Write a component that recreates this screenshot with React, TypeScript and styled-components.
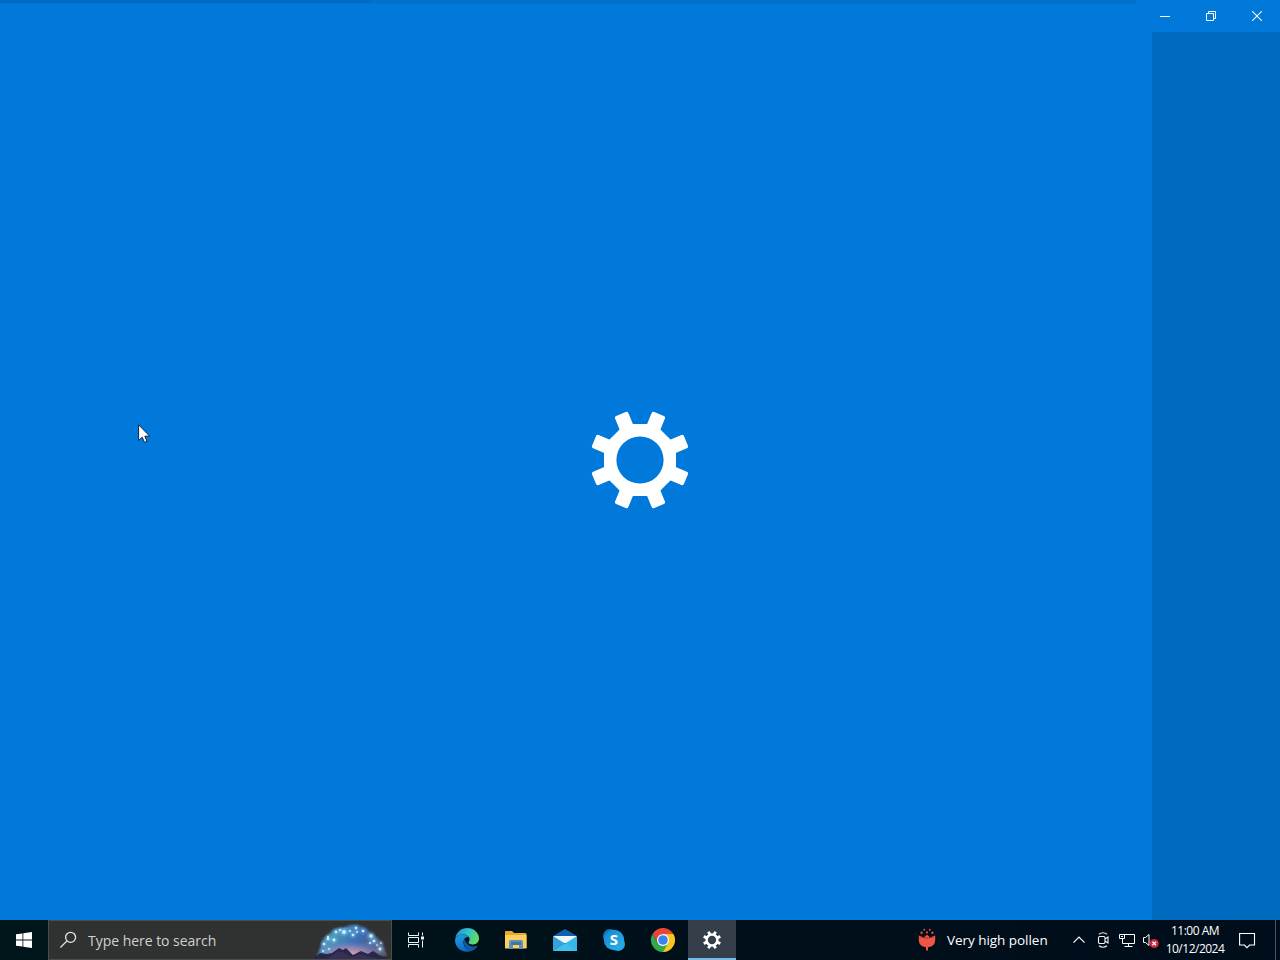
import React from "react";
import styled, { createGlobalStyle } from "styled-components";

const TEETH = [22.5, 67.5, 112.5, 157.5, 202.5, 247.5, 292.5, 337.5];

const SPARKS = [
  [9, 23, 1.6], [13, 16, 1.3], [8, 30, 1.2], [14, 28, 1.1], [19, 19, 1.7],
  [21, 11, 1.5], [25, 9, 1.3], [29, 11, 2.3], [35, 10, 1.2], [41, 7, 1.4],
  [38, 14, 1.5], [48, 10, 1.5], [42, 11, 1.1], [56, 15, 2.1], [59, 20, 1.6],
  [55, 22, 1.2], [65, 28, 1.7], [66, 22, 1], [13, 18, 1.5], [62, 24, 1],
];

const BigGear = () => (
  <svg width="100" height="100" viewBox="-50 -50 100 100" fill="#fff">
    {TEETH.map((angle) => (
      <rect key={angle} x="-7.2" y="-49.8" width="14.4" height="22" rx="2" transform={`rotate(${angle})`} />
    ))}
    <path
      fillRule="evenodd"
      d="M-14.9-36H14.9L36-14.9V14.9L14.9 36H-14.9L-36 14.9V-14.9ZM0-23.6A23.6 23.6 0 1 0 0 23.6A23.6 23.6 0 1 0 0-23.6Z"
    />
  </svg>
);

const SmallGear = () => (
  <svg width="18" height="18" viewBox="-50 -50 100 100" fill="#fff">
    {TEETH.map((angle) => (
      <rect key={angle} x="-8" y="-50" width="16" height="22" rx="2" transform={`rotate(${angle})`} />
    ))}
    <circle r="30" fill="none" stroke="#fff" strokeWidth="14" />
  </svg>
);

const CursorIcon = () => (
  <svg width="13" height="20" viewBox="0 0 13 20">
    <path d="M.6.8V16.5L4.2 13.2L6.5 18.4L9 17.3L6.8 12.2H11.7Z" fill="#fff" stroke="#0b2440" strokeWidth="1" />
  </svg>
);

const WindowsIcon = () => (
  <svg width="16" height="16" viewBox="0 0 16 16" fill="#fff">
    <path d="M0 2.3L6.5 1.4V7.6H0ZM7.3 1.3L16 0V7.6H7.3ZM0 8.4H6.5V14.6L0 13.7ZM7.3 8.4H16V16L7.3 14.7Z" />
  </svg>
);

const SearchIcon = () => (
  <svg width="18" height="18" viewBox="0 0 18 18" fill="none" stroke="#e6e6e6" strokeWidth="1.3">
    <circle cx="10.6" cy="6.3" r="5" />
    <path d="M7 9.9L.4 16.6" />
  </svg>
);

const HighlightArt = () => (
  <svg width="76" height="38" viewBox="0 0 76 38">
    <defs>
      <linearGradient id="dome" x1="0" y1="0" x2="1" y2="0.2">
        <stop offset="0" stopColor="#4e5a92" />
        <stop offset="0.3" stopColor="#4c93b5" />
        <stop offset="0.65" stopColor="#3b6cb5" />
        <stop offset="1" stopColor="#605d78" />
      </linearGradient>
      <radialGradient id="dusk" cx="0.48" cy="0.95" r="0.6">
        <stop offset="0" stopColor="#e8a3a8" />
        <stop offset="0.5" stopColor="#a88bb8" stopOpacity="0.7" />
        <stop offset="1" stopColor="#667dc0" stopOpacity="0" />
      </radialGradient>
      <filter id="soft">
        <feGaussianBlur stdDeviation="1" />
      </filter>
    </defs>
    <path d="M2 35L5 27L8 18L14 13L19 8L28 7L36 4L42 4L51 7L56 12L63 17L68 23L72 35Z" fill="url(#dome)" filter="url(#soft)" />
    <path d="M6 34L14 20L28 12L44 12L57 22L66 34Z" fill="url(#dusk)" />
    <g filter="url(#soft)">
      {SPARKS.map(([x, y, r]) => (
        <circle key={`${x}-${y}`} cx={x} cy={y} r={r * 1.7} fill="#74c6ee" opacity="0.6" />
      ))}
    </g>
    <path d="M-2 38L5 32L12 33L17 32L24 27L28 29L31 27L38 34L46 30L53 33L58 30L66 35L74 38Z" fill="#292747" />
    <path d="M12 38L23 30L29 32L36 36L45 33L56 36L64 38Z" fill="#382f57" />
    {SPARKS.map(([x, y, r]) => (
      <circle key={`${x}-${y}`} cx={x} cy={y} r={r * 0.85} fill="#cfeffb" />
    ))}
  </svg>
);

const TaskViewIcon = () => (
  <svg width="18" height="18" viewBox="0 0 18 18" fill="none" stroke="#f2f5f5">
    <path d="M1.5 1.5V4.5H11.5V1.5M1.5 16.5V13.5H11.5V16.5M1.5 6.5H11.5V11.5H1.5ZM15.5 1.5V4.5M15.5 9.5V16.5" />
    <path d="M14 5.5H17V8.5H14Z" fill="#f2f5f5" stroke="none" />
  </svg>
);

const EdgeIcon = () => (
  <svg width="24" height="24" viewBox="0 0 24 24">
    <defs>
      <linearGradient id="edgeTop" x1="0" y1="0.3" x2="1" y2="0.6">
        <stop offset="0" stopColor="#1999df" />
        <stop offset="0.5" stopColor="#35c1c8" />
        <stop offset="1" stopColor="#68dd56" />
      </linearGradient>
      <linearGradient id="edgeSide" x1="0" y1="0" x2="0.5" y2="1">
        <stop offset="0" stopColor="#1fa4e3" />
        <stop offset="1" stopColor="#0c68bd" />
      </linearGradient>
    </defs>
    <path d="M.3 10.2C1.5 4 6.3 0 12.2 0C19 0 24 4.9 24 10.4C24 14.3 21 16.4 17.5 16.4C14.9 16.4 13.5 15.5 13.5 14.6C13.5 14 14.6 13.3 14.6 11.3C14.6 8.7 11.7 6.6 7.9 6.6C4.3 6.6 1.4 8.1.3 10.2Z" fill="url(#edgeTop)" />
    <path d="M.2 11C1.3 8.1 4.4 6.6 7.9 6.6C10.6 6.6 12.8 7.6 13.9 9.2C11 8.3 8.5 10.9 8.5 14.3C8.5 18.8 12.3 22.6 16.7 23C6.9 26.2-.9 19.3.2 11Z" fill="url(#edgeSide)" />
    <path d="M10 10.8C6.6 15.9 11.2 23.3 16.7 23C19 22.2 21.2 20.6 22.2 18.4C22.4 17.9 22 17.6 21.5 17.8C16.8 20 10.4 16.8 10 10.8Z" fill="#1257a3" />
  </svg>
);

const FolderIcon = () => (
  <svg width="22" height="20" viewBox="0 0 22 20">
    <path d="M0 2Q0 1 1 1H7L9 3H20Q21.5 3 21.5 4V18H0Z" fill="#e9ac28" />
    <path d="M0 5H21.5V18.5H0Z" fill="#fbd05e" />
    <path d="M4 19V12Q4 10 6 10H16Q18 10 18 12V19H14V15H8V19Z" fill="#5b92bd" />
    <path d="M6 13Q6 12 7 12H15Q16 12 16 13V15H6Z" fill="#41749f" />
  </svg>
);

const MailIcon = () => (
  <svg width="24" height="22" viewBox="0 0 24 22">
    <path d="M0 7L12 0L24 7V13H0Z" fill="#0f62ad" />
    <path d="M1 7H23V14H1Z" fill="#eef8fc" />
    <path d="M0 7L12 14.5L0 22Z" fill="#35a3d8" />
    <path d="M24 7V22H0L12 14.5Z" fill="#38b8e9" />
    <path d="M0 22L12 14.5L24 22Z" fill="#43c0ea" />
  </svg>
);

const SkypeIcon = () => (
  <svg width="22" height="22" viewBox="0 0 22 22">
    <defs>
      <linearGradient id="skype" x1="0" y1="0" x2="1" y2="1">
        <stop offset="0" stopColor="#1686ce" />
        <stop offset="1" stopColor="#28b4ea" />
      </linearGradient>
    </defs>
    <circle cx="7" cy="7" r="7" fill="#0f78bd" />
    <circle cx="15" cy="15" r="7" fill="#20a9df" />
    <circle cx="11" cy="11" r="10.2" fill="url(#skype)" />
    <text x="11" y="16.4" textAnchor="middle" fill="#fff" fontFamily="Open Sans, sans-serif" fontWeight="700" fontSize="15">S</text>
  </svg>
);

const ChromeIcon = () => (
  <svg width="24" height="24" viewBox="0 0 24 24">
    <path d="M12 12L22.4 6A12 12 0 0 1 12 24Z" fill="#fbc51b" />
    <path d="M12 6H22.4L18 14L12 12ZM17.2 15L12 24L10 16Z" fill="#fbc51b" />
    <path d="M1.6 6L6.8 15L10 6H22.4A12 12 0 0 0 1.6 6Z" fill="#e94435" />
    <path d="M17.2 15L12 24A12 12 0 0 1 1.6 6L6.8 15L12 17Z" fill="#32a852" />
    <circle cx="12" cy="12" r="6" fill="#fff" />
    <circle cx="12" cy="12" r="4.8" fill="#3b82ee" />
  </svg>
);

const PollenIcon = () => (
  <svg width="18" height="24" viewBox="0 0 18 24">
    <path d="M.8 7.5Q3.5 7.5 5.5 10Q7 8 9 6.8Q11 8 12.5 10Q14.5 7.5 17.2 7.5V12Q17.2 18.4 10 19.2V22.5H8V19.2Q.8 18.4.8 12Z" fill="#ee5544" />
    <path d="M2 8.5Q4.5 10 9 10Q13.5 10 16 8.5" fill="none" stroke="#b9262c" strokeWidth="1" />
    <g fill="#e24c40">
      <circle cx="3.6" cy="4.8" r="1.2" />
      <circle cx="6.2" cy="1.8" r="1" />
      <circle cx="11.8" cy="1.8" r="1" />
      <circle cx="14.4" cy="4.8" r="1.2" />
      <circle cx="9" cy="4.4" r="1.1" />
    </g>
  </svg>
);

const ChevronIcon = () => (
  <svg width="12" height="8" viewBox="0 0 12 8" fill="none" stroke="#fff" strokeWidth="1.2">
    <path d="M.5 6.7L6 1.2L11.5 6.7" />
  </svg>
);

const MeetIcon = () => (
  <svg width="14" height="16" viewBox="0 0 14 16" fill="none" stroke="#f4f4f4" strokeWidth="1.1">
    <rect x="1.5" y="4.5" width="6.5" height="7" rx="1.2" />
    <path d="M8 7L11 5V11L8 9M2 2.2Q6-.8 10 2.2M2 13.8Q6 16.8 10 13.8" />
  </svg>
);

const NetworkIcon = () => (
  <svg width="17" height="16" viewBox="0 0 17 16" fill="none" stroke="#fff">
    <path d="M6 2.5H16.5V11.5H4.5V6.5M1.5 2.5H6.5V6.5H1.5ZM10.5 11.5V14.5M6.5 14.5H14.5M3 4.5H5" />
  </svg>
);

const MutedIcon = () => (
  <svg width="17" height="16" viewBox="0 0 17 16">
    <path d="M1.5 5.5H3.5L7 2.5V13.5L3.5 10.5H1.5Z" fill="none" stroke="#fff" />
    <circle cx="12.2" cy="11.5" r="4.5" fill="#cf2638" />
    <path d="M10.4 9.7L14 13.3M14 9.7L10.4 13.3" stroke="#fff" strokeWidth="1.3" />
  </svg>
);

const NotificationIcon = () => (
  <svg width="17" height="17" viewBox="0 0 17 17" fill="none" stroke="#fff" strokeWidth="1.1">
    <path d="M.6 1.5H15.5V13H10.6L8 15.7L5.4 13H.6Z" />
  </svg>
);

const App = () => {
  return (
    <>
      <GlobalStyle />
      <Desktop>
        <SettingsWindow>
          <TopEdge />
          <SidePanel />
          <Splash>
            <BigGear />
          </Splash>
          <Caption>
            <CaptionButton aria-label="Minimize">
              <svg width="10" height="10" fill="none" stroke="#fff"><path d="M0 5.5H10" /></svg>
            </CaptionButton>
            <CaptionButton aria-label="Restore">
              <svg width="10" height="10" fill="none" stroke="#fff"><path d="M.5 2.5H7.5V9.5H.5ZM2.5 2.5V.5H9.5V7.5H7.5" /></svg>
            </CaptionButton>
            <CaptionButton aria-label="Close">
              <svg width="10" height="10" fill="none" stroke="#fff" strokeWidth="1.1"><path d="M.3.3L9.7 9.7M9.7.3L.3 9.7" /></svg>
            </CaptionButton>
          </Caption>
        </SettingsWindow>
        <Taskbar>
          <TaskButton><WindowsIcon /></TaskButton>
          <SearchBox>
            <SearchIcon />
            <span>Type here to search</span>
            <HighlightArt />
          </SearchBox>
          <TaskButton><TaskViewIcon /></TaskButton>
          <Apps>
            <TaskButton><EdgeIcon /></TaskButton>
            <TaskButton><FolderIcon /></TaskButton>
            <TaskButton><MailIcon /></TaskButton>
            <TaskButton><SkypeIcon /></TaskButton>
            <TaskButton><ChromeIcon /></TaskButton>
            <TaskButton $active><SmallGear /></TaskButton>
          </Apps>
          <Weather>
            <PollenIcon />
            <span>Very high pollen</span>
          </Weather>
          <Tray>
            <ChevronIcon />
            <MeetIcon />
            <NetworkIcon />
            <MutedIcon />
          </Tray>
          <Clock>
            <span>11:00 AM</span>
            <span>10/12/2024</span>
          </Clock>
          <Notifications><NotificationIcon /></Notifications>
        </Taskbar>
        <Pointer><CursorIcon /></Pointer>
      </Desktop>
    </>
  );
};

const GlobalStyle = createGlobalStyle`
  * { box-sizing: border-box; }
  body { margin: 0; overflow: hidden; }
  svg { display: block; flex-shrink: 0; }
`;

const Desktop = styled.div`
  position: relative;
  display: flex;
  flex-direction: column;
  width: 1280px;
  height: 960px;
  font-family: "Open Sans", "Noto Sans", sans-serif;
  cursor: default;
`;

const SettingsWindow = styled.main`
  display: grid;
  height: 920px;
  background: #0079da;

  > * {
    grid-area: 1 / 1;
  }
`;

const TopEdge = styled.div`
  width: 1136px;
  height: 4px;
  background: linear-gradient(90deg, #006bc2 0 370px, #0070cb 370px);
  border-bottom: 1px solid #0074d0;
`;

const SidePanel = styled.aside`
  justify-self: end;
  width: 128px;
  margin-top: 32px;
  background: #006abf;
`;

const Splash = styled.div`
  display: flex;
  place-self: center;
`;

const Caption = styled.div`
  display: flex;
  justify-self: end;
  align-self: start;
`;

const CaptionButton = styled.button`
  display: flex;
  align-items: center;
  justify-content: center;
  width: 46px;
  height: 32px;
  padding: 0;
  border: 0;
  background: none;
`;

const Taskbar = styled.footer`
  display: flex;
  height: 40px;
  color: #fff;
  background: linear-gradient(90deg, #001519, #00101a 50%, #000d1b);
`;

const TaskButton = styled.div<{ $active?: boolean }>`
  display: flex;
  align-items: center;
  justify-content: center;
  width: 48px;
  height: 40px;
  background: ${({ $active }) => ($active ? "#343f49" : "transparent")};
  box-shadow: ${({ $active }) => ($active ? "inset 0 -2px #76b9ed" : "none")};
`;

const SearchBox = styled.div`
  display: flex;
  align-items: center;
  width: 344px;
  padding-left: 11px;
  border: 1px solid #4b4d4d;
  background: #303131;
  color: #d0d0d0;
  font-size: 14px;
  letter-spacing: -0.03px;

  span {
    margin-left: 10px;
    white-space: nowrap;
  }

  svg:last-child {
    margin-left: auto;
  }
`;

const Apps = styled.div`
  display: flex;
  gap: 1px;
  margin-left: 3px;
`;

const Weather = styled.div`
  display: flex;
  align-items: center;
  gap: 11px;
  width: 155px;
  margin-left: 182px;
  font-size: 13.5px;
  letter-spacing: -0.04px;
  white-space: nowrap;
`;

const Tray = styled.div`
  display: flex;
  align-items: center;
  gap: 8px;
  width: 92px;

  svg:nth-child(2) {
    margin-left: 4px;
  }

  svg:nth-child(3) {
    margin-left: -1px;
  }

  svg:nth-child(4) {
    margin-left: -1px;
  }
`;

const Clock = styled.div`
  display: flex;
  flex-direction: column;
  align-items: center;
  width: 60px;
  padding-top: 2px;
  font-size: 12px;
  line-height: 18px;
  letter-spacing: -0.5px;
  white-space: nowrap;
`;

const Notifications = styled.div`
  display: flex;
  align-items: center;
  flex: 1;
  margin-right: 4px;
  padding-left: 14px;
  border-right: 1px solid #485461;
`;

const Pointer = styled.div`
  position: absolute;
  left: 138px;
  top: 424px;
`;

export default App;
